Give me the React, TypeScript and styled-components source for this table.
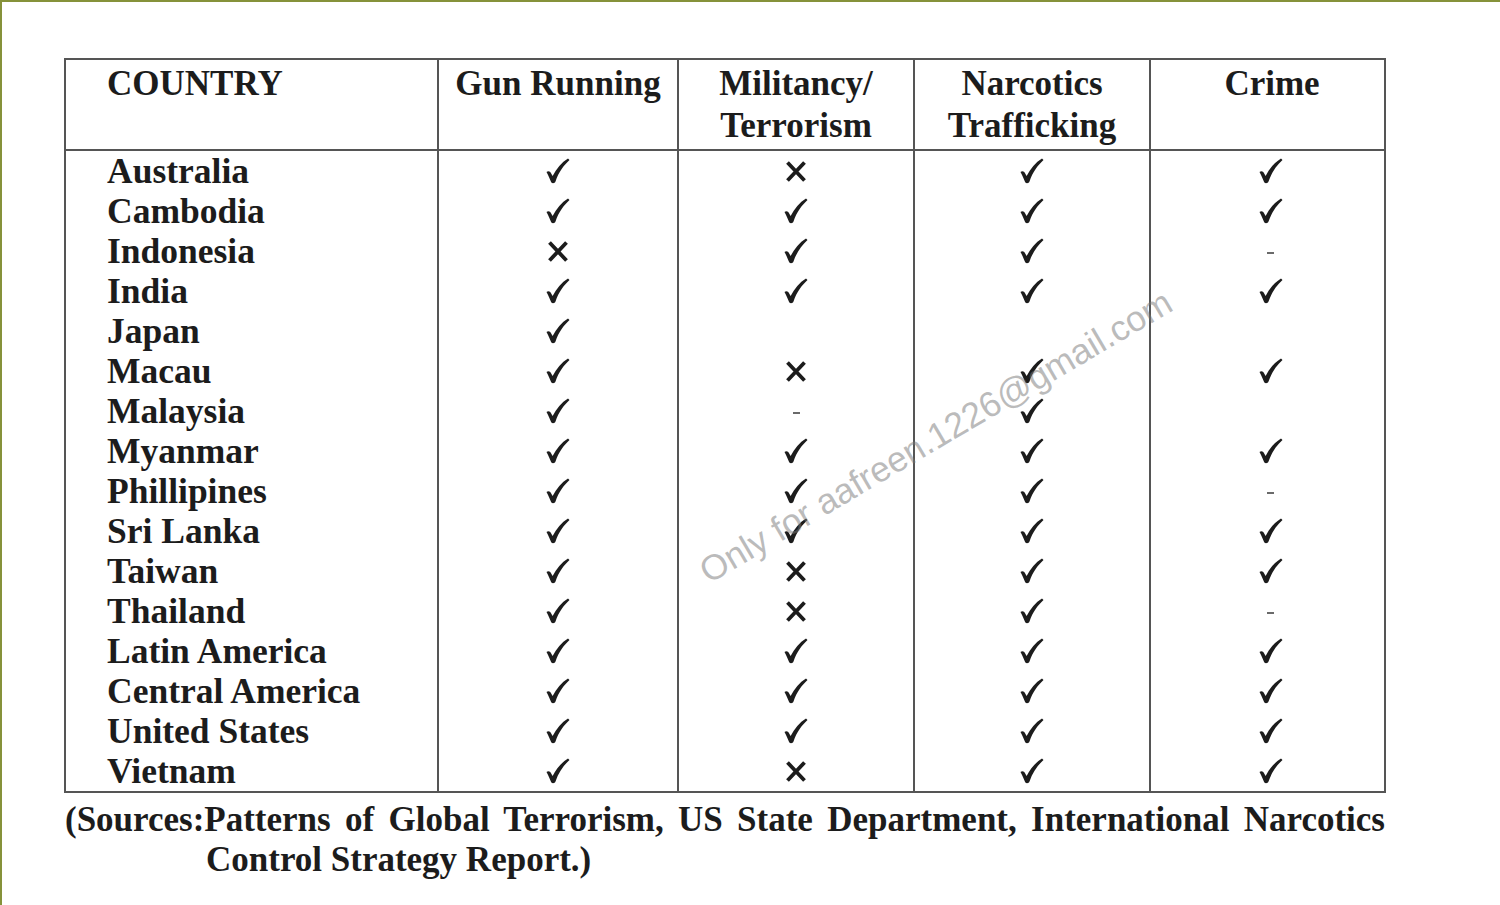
import React from "react";
import styled, { createGlobalStyle } from "styled-components";

const Global = createGlobalStyle`
  html, body { margin: 0; padding: 0; background: #ffffff; }
  body { font-family: "Liberation Serif", "Times New Roman", serif; }
`;

const INK = "#1c1c1c";
const RULE = "#555555";
const COLS = "371px 240px 236px 236px 235px";

const Page = styled.div`
  position: relative;
  width: 1500px;
  height: 905px;
  box-sizing: border-box;
  border-top: 2px solid #86923a;
  border-left: 2px solid #86923a;
  padding: 56px 0 0 62px;
  background: #ffffff;
  overflow: hidden;
`;

const Table = styled.div`
  width: 1322px;
  box-sizing: border-box;
  border: 2px solid ${RULE};
  display: flex;
  flex-direction: column;
`;

const Row = styled.div`
  display: grid;
  grid-template-columns: ${COLS};
`;

const HeadCell = styled.div<{ $first?: boolean; $shift?: number }>`
  box-sizing: border-box;
  height: 91px;
  padding-top: 3px;
  padding-left: ${(p) => (p.$first ? 41 : p.$shift ?? 0)}px;
  border-left: ${(p) => (p.$first ? "none" : `2px solid ${RULE}`)};
  border-bottom: 2px solid ${RULE};
  text-align: ${(p) => (p.$first ? "left" : "center")};
  font-family: "Liberation Serif", "Times New Roman", serif;
  font-weight: 700;
  font-size: 35px;
  line-height: 42px;
  color: ${INK};
`;

const NameCell = styled.div`
  box-sizing: border-box;
  height: 40px;
  padding-left: 41px;
  display: flex;
  align-items: center;
  font-family: "Liberation Serif", "Times New Roman", serif;
  font-weight: 700;
  font-size: 35.5px;
  line-height: 40px;
  color: ${INK};
  white-space: nowrap;
`;

const MarkCell = styled.div<{ $shift?: number }>`
  box-sizing: border-box;
  height: 40px;
  border-left: 2px solid ${RULE};
  padding-left: ${(p) => p.$shift ?? 0}px;
  display: flex;
  align-items: center;
  justify-content: center;
`;

const Dash = styled.span`
  display: block;
  width: 7px;
  height: 2px;
  background: #6a6a6a;
  margin-top: 3px;
`;

const Footer = styled.div`
  width: 1322px;
  box-sizing: border-box;
  padding: 7px 1px 0 1px;
  font-family: "Liberation Serif", "Times New Roman", serif;
  font-weight: 700;
  font-size: 35px;
  line-height: 40px;
  color: ${INK};
`;

const FootLine = styled.span<{ $indent?: number }>`
  display: block;
  padding-left: ${(p) => p.$indent ?? 0}px;
  text-align: ${(p) => (p.$indent ? "left" : "justify")};
  text-align-last: ${(p) => (p.$indent ? "left" : "justify")};
`;

const Watermark = styled.span`
  position: absolute;
  left: 934px;
  top: 435px;
  transform: translate(-50%, -50%) rotate(-30.5deg);
  font-family: "Liberation Sans", Arial, sans-serif;
  font-size: 35.5px;
  color: rgba(120, 120, 120, 0.5);
  white-space: nowrap;
  pointer-events: none;
`;

const Check = () => (
  <svg width="24" height="26" viewBox="0 0 24 26" aria-hidden="true">
    <path
      d="M0.5 14 C2.5 12.5 4.2 13.5 5.2 15.5 L6.6 18 C10.5 10.5 15.5 4.5 22 0.5 L23.5 2 C17.5 7.5 12.5 14.5 9.5 23.5 C9 25.3 6.2 25.8 5.2 24.2 C4 21.5 2.5 17.5 0.5 14 Z"
      fill={INK}
    />
  </svg>
);

const Cross = () => (
  <svg width="22" height="23" viewBox="0 0 22 23" aria-hidden="true">
    <path d="M2.5 2.5 L19.5 20.5 M19.5 2.5 L2.5 20.5" stroke={INK} strokeWidth="3.8" fill="none" />
  </svg>
);

type M = "C" | "X" | "D" | "";

const rows: [string, M, M, M, M][] = [
  ["Australia", "C", "X", "C", "C"],
  ["Cambodia", "C", "C", "C", "C"],
  ["Indonesia", "X", "C", "C", "D"],
  ["India", "C", "C", "C", "C"],
  ["Japan", "C", "", "", ""],
  ["Macau", "C", "X", "C", "C"],
  ["Malaysia", "C", "D", "C", ""],
  ["Myanmar", "C", "C", "C", "C"],
  ["Phillipines", "C", "C", "C", "D"],
  ["Sri Lanka", "C", "C", "C", "C"],
  ["Taiwan", "C", "X", "C", "C"],
  ["Thailand", "C", "X", "C", "D"],
  ["Latin America", "C", "C", "C", "C"],
  ["Central America", "C", "C", "C", "C"],
  ["United States", "C", "C", "C", "C"],
  ["Vietnam", "C", "X", "C", "C"],
];

const Mark = ({ m }: { m: M }) => {
  if (m === "C") return <Check />;
  if (m === "X") return <Cross />;
  if (m === "D") return <Dash />;
  return null;
};

export default function App() {
  return (
    <>
      <Global />
      <Page>
        <Table>
          <Row>
            <HeadCell $first>COUNTRY</HeadCell>
            <HeadCell>Gun Running</HeadCell>
            <HeadCell>
              Militancy/
              <br />
              Terrorism
            </HeadCell>
            <HeadCell>
              Narcotics
              <br />
              Trafficking
            </HeadCell>
            <HeadCell $shift={9}>Crime</HeadCell>
          </Row>
          {rows.map(([name, a, b, c, d]) => (
            <Row key={name}>
              <NameCell>{name}</NameCell>
              <MarkCell>
                <Mark m={a} />
              </MarkCell>
              <MarkCell>
                <Mark m={b} />
              </MarkCell>
              <MarkCell>
                <Mark m={c} />
              </MarkCell>
              <MarkCell $shift={6}>
                <Mark m={d} />
              </MarkCell>
            </Row>
          ))}
        </Table>
        <Footer>
          <FootLine>
            (Sources:Patterns of Global Terrorism, US State Department, International Narcotics
          </FootLine>
          <FootLine $indent={141}>Control Strategy Report.)</FootLine>
        </Footer>
        <Watermark>Only for aafreen.1226@gmail.com</Watermark>
      </Page>
    </>
  );
}
